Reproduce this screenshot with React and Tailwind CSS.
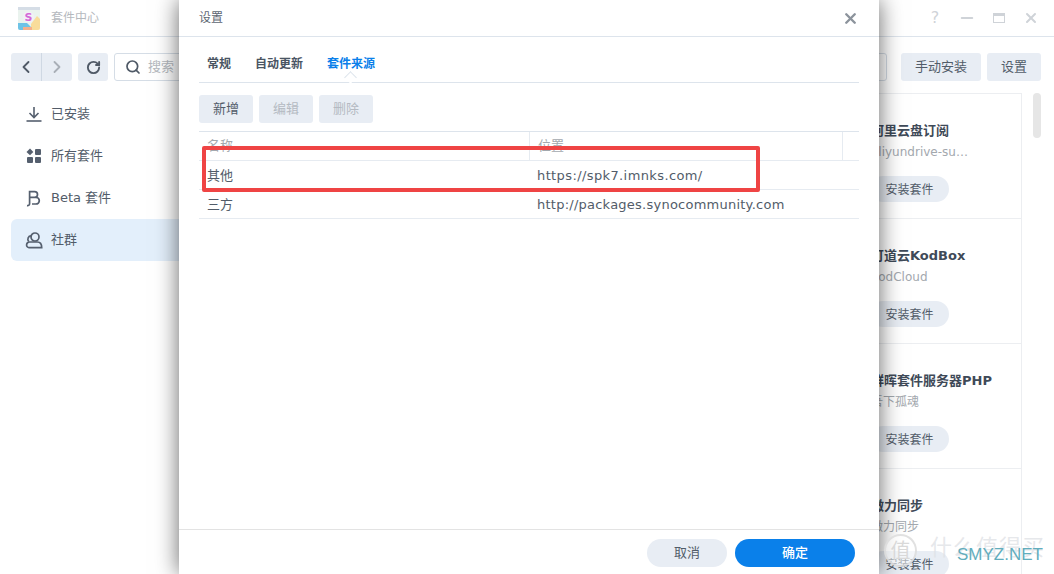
import { ChevronLeft, ChevronRight, RotateCw, Search, X, Minus } from 'lucide-react'

const FONT = "font-['DejaVu_Sans','Noto_Sans_CJK_SC',sans-serif]"

const cards = [
  { title: '阿里云盘订阅', sub: 'aliyundrive-subscribe' },
  { title: '可道云KodBox', sub: 'KodCloud' },
  { title: '群晖套件服务器PHP', sub: '吾下孤魂' },
  { title: '微力同步', sub: '微力同步' },
]

function AppLogo() {
  return (
    <svg width="22" height="23" viewBox="0 0 22 23">
      <rect x="0" y="0" width="22" height="23" rx="2" fill="#eaf3ee" />
      <rect x="0" y="0" width="22" height="3" fill="#d5dde6" />
      <path d="M0 16h9l4 4v3H2a2 2 0 0 1-2-2z" fill="#6ec3e6" />
      <path d="M13 17l6-8 3 3v9a2 2 0 0 1-2 2h-7z" fill="#f8dc9a" />
      <path d="M5 20h9v3H5z" fill="#f5b08c" />
      <circle cx="10.5" cy="10" r="5.5" fill="#f3f0f7" />
      <text x="10.5" y="14" textAnchor="middle" fontSize="11" fontWeight="700" fill="#d36ad8">S</text>
    </svg>
  )
}

function InstalledIcon() {
  return (
    <svg width="18" height="18" viewBox="0 0 18 18" fill="none" stroke="#555f6e" strokeWidth="1.6">
      <path d="M9 2v10M4.5 8 9 12.5 13.5 8" />
      <path d="M1.5 16h15" />
    </svg>
  )
}

function AllIcon() {
  return (
    <svg width="18" height="18" viewBox="0 0 18 18" fill="#555f6e">
      <path d="M5 1.5 8.3 5 5 8.3 1.5 5z" />
      <rect x="10" y="2" width="6" height="6" rx="1" />
      <rect x="2" y="10" width="6" height="6" rx="1" />
      <rect x="10" y="10" width="6" height="6" rx="1" />
    </svg>
  )
}

function BetaIcon() {
  return (
    <svg width="18" height="18" viewBox="0 0 18 18" fill="none" stroke="#555f6e" strokeWidth="1.7">
      <path d="M2 16.6c1.6.2 2.6-.5 2.6-2.2V2.6h5a2.9 2.9 0 0 1 0 5.8H5h6a3.3 3.3 0 0 1 0 6.6H7" />
    </svg>
  )
}

function CommunityIcon() {
  return (
    <svg width="18" height="18" viewBox="0 0 18 18" fill="none" stroke="#555f6e" strokeWidth="1.7">
      <circle cx="10" cy="6" r="4" />
      <path d="M6.4 4.9a3.3 3.3 0 0 0-2.6 5.6" />
      <path d="M1.6 14a3 3 0 0 1 3-3h7.8c2.6 0 4.3 2 4.3 5.6H4a2.5 2.5 0 0 1-2.4-2.6z" />
    </svg>
  )
}

function SideItem({ icon, label, active }) {
  return (
    <div className={`flex h-[42px] items-center gap-2 rounded-md pl-[14px] text-[13px] text-[#525c69] ${active ? 'bg-[#e3effb]' : ''}`}>
      {icon}
      <span>{label}</span>
    </div>
  )
}

function Card({ title, sub }) {
  return (
    <div className="h-[125px] border-b border-[#eceef1] pt-[27px] pl-[170px]">
      <div className="h-5 text-[13px] leading-5 font-bold whitespace-nowrap text-[#3f4a58]">{title}</div>
      <div className="mt-[2px] h-[18px] w-[98px] truncate text-xs leading-[18px] text-[#a3a8ae]">{sub}</div>
      <button className="mt-[15px] -ml-px h-[26px] w-[79px] rounded-full bg-[#e8edf4] pt-px text-xs text-[#525c69]">安装套件</button>
    </div>
  )
}

function DialogButton({ children, disabled }) {
  return (
    <button className={`h-7 w-[54px] rounded-[3px] bg-[#e8edf4] text-[13px] ${disabled ? 'text-[#b4bac2]' : 'text-[#525c69]'}`}>
      {children}
    </button>
  )
}

function Dialog() {
  return (
    <div className="absolute top-0 bottom-0 left-[179px] flex w-[700px] flex-col bg-white shadow-[0_0_22px_rgba(0,0,0,0.6)]">
      <div className="flex h-[37px] shrink-0 items-center justify-between border-b border-[#dde4ec] pr-5 pl-5">
        <span className="text-xs text-[#5d6672]">设置</span>
        <X size={17} strokeWidth={3.4} className="text-[#8c939c]" />
      </div>

      <div className="flex-1 px-5">
        <div className="relative flex h-[46px] items-end gap-6 border-b border-[#dde4ec] pb-[10px] pl-2 text-xs font-semibold">
          <span className="text-[#4a5563]">常规</span>
          <span className="text-[#4a5563]">自动更新</span>
          <span className="text-[#0a80ea]">套件来源</span>
          <div className="absolute bottom-[-1px] left-[147px] size-[9px] translate-y-[-1px] rotate-45 border-t border-l border-[#dde4ec] bg-white"></div>
        </div>

        <div className="mt-3 flex gap-[6px]">
          <DialogButton>新增</DialogButton>
          <DialogButton disabled>编辑</DialogButton>
          <DialogButton disabled>删除</DialogButton>
        </div>

        <div className="mt-2 border-t border-[#dde4ec] text-[13px]">
          <div className="flex h-[29px] border-b border-[#e6ebf1] text-[#a3a8ae]">
            <div className="w-[331px] border-r border-[#e6ebf1] pt-1 pl-2">名称</div>
            <div className="w-[313px] border-r border-[#e6ebf1] pt-1 pl-2">位置</div>
          </div>
          <div className="flex h-[29px] items-center border-b border-[#e6ebf1] pt-px text-[#525c69]">
            <div className="w-[331px] pl-2">其他</div>
            <div className="pl-[7px] tracking-[0.39px]">https://spk7.imnks.com/</div>
          </div>
          <div className="flex h-[29px] items-center border-b border-[#e6ebf1] pt-px text-[#525c69]">
            <div className="w-[331px] pl-2">三方</div>
            <div className="pl-[7px] tracking-[0.24px]">http://packages.synocommunity.com</div>
          </div>
        </div>
      </div>

      <div className="flex h-[45px] shrink-0 items-start justify-end gap-2 border-t border-[#e3e3e3] pt-[9px] pr-6">
        <button className="h-7 w-20 rounded-full bg-[#e8edf4] text-[13px] text-[#525c69]">取消</button>
        <button className="h-7 w-[120px] rounded-full bg-[#0a80ea] text-[13px] font-medium text-white">确定</button>
      </div>
    </div>
  )
}

export default function App() {
  return (
    <div className={`relative h-[574px] overflow-hidden bg-white ${FONT}`}>
      {/* BACKGROUND WINDOW */}
      <div className="flex h-[37px] items-center justify-between border-b border-[#dde4ec] pr-[15px] pl-[18px]">
        <div className="flex items-center gap-[11px]">
          <AppLogo />
          <span className="text-xs text-[#b5b9be]">套件中心</span>
        </div>
        <div className="flex items-center text-[#cfd3d8]">
          <span className="w-4 text-center text-base leading-none">?</span>
          <Minus size={18} strokeWidth={2.6} className="ml-[15px]" />
          <div className="ml-[17px] h-[10px] w-3 border border-t-[3px] border-[#cfd3d8]"></div>
          <X size={16} strokeWidth={3} className="ml-[18px]" />
        </div>
      </div>

      <div className="flex gap-[6px] pt-4 pr-[13px] pl-[11px]">
        <div className="flex h-7 w-[61px] rounded-[3px] bg-[#e8edf4]">
          <div className="flex w-[31px] items-center justify-center border-r border-[#cfd8e3]">
            <ChevronLeft size={20} strokeWidth={2.2} className="text-[#4f5966]" />
          </div>
          <div className="flex w-[30px] items-center justify-center">
            <ChevronRight size={20} strokeWidth={2.2} className="text-[#a9afb7]" />
          </div>
        </div>
        <div className="flex h-7 w-[30px] items-center justify-center rounded-[3px] bg-[#e8edf4]">
          <RotateCw size={15} strokeWidth={3} className="text-[#4f5966]" />
        </div>
        <div className="flex h-7 flex-1 items-center gap-[7px] rounded-[3px] border border-[#d5dde6] pl-[10px] text-[13px] text-[#b5b9be]">
          <Search size={16} strokeWidth={2.6} className="text-[#4f5966]" />
          <span>搜索</span>
        </div>
        <button className="ml-2 h-7 w-20 rounded-[3px] bg-[#e8edf4] text-[13px] text-[#525c69]">手动安装</button>
        <button className="h-7 w-[54px] rounded-[3px] bg-[#e8edf4] text-[13px] text-[#525c69]">设置</button>
      </div>

      <div className="flex pt-3 pr-[13px] pl-[11px]">
        <div className="w-[179px] shrink-0">
          <SideItem icon={<InstalledIcon />} label="已安装" />
          <SideItem icon={<AllIcon />} label="所有套件" />
          <SideItem icon={<BetaIcon />} label="Beta 套件" />
          <SideItem icon={<CommunityIcon />} label="社群" active />
        </div>
        <div className="flex flex-1 justify-end gap-[11px]">
          <div className="w-[322px] border-x border-t border-[#eceef1]">
            {cards.map(card => (
              <Card key={card.title} title={card.title} sub={card.sub} />
            ))}
          </div>
          <div className="h-[45px] w-2 rounded-full bg-[#e6e6e6]"></div>
        </div>
      </div>

      <Dialog />

      {/* RED ANNOTATION */}
      <div className="absolute top-[146px] left-[202px] h-[46px] w-[558px] rounded-[2px] border-4 border-[#ef4444]"></div>

      {/* WATERMARK */}
      <div className="absolute top-[534px] left-[884px] flex size-[33px] items-center justify-center rounded-full border-2 border-[#d9d9d9]/80 bg-white/50 text-xl text-[#d9d9d9]">值</div>
      <div className="absolute top-[531px] left-[930px] text-[22px] tracking-[1px] whitespace-nowrap text-[#dfe2e6]/80">什么值得买</div>
      <div className="absolute top-[543px] left-[957px] font-['Liberation_Sans',sans-serif] text-[17px] leading-6 text-[#62adbd]">SMYZ.NET</div>
    </div>
  )
}
